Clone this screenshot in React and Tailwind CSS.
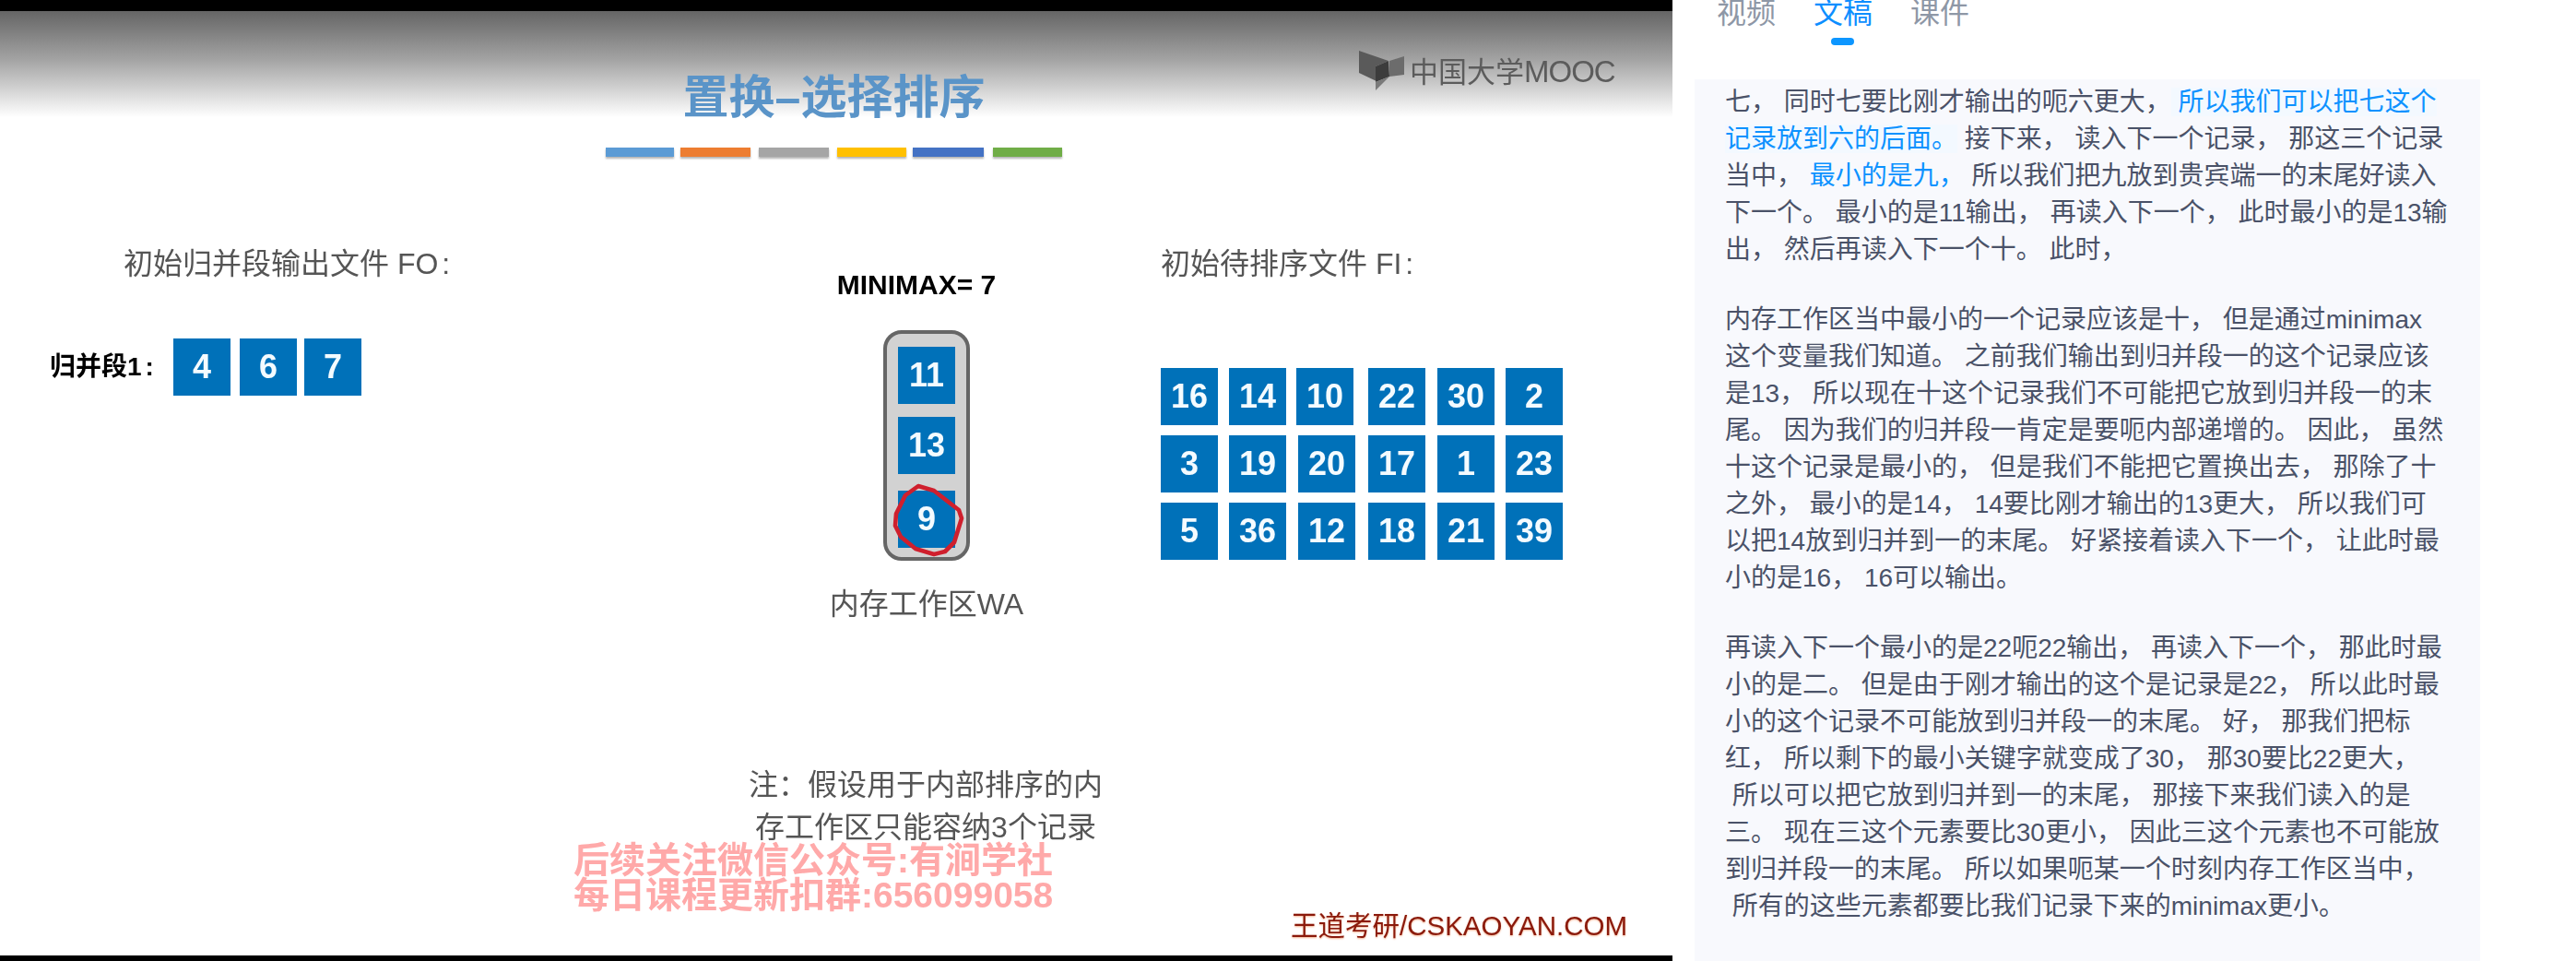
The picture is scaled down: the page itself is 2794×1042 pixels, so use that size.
const fw = (s) => s.replace(/,/g, "\uFF0C");

const Cell = ({ n, className = "" }) => (
  <div className={`flex h-[62px] w-[62px] shrink-0 items-center justify-center bg-[#0071b9] text-[36px] font-bold text-[#f4fbff] ${className}`}>
    {n}
  </div>
);

const bars = ["bg-[#5b9bd5] w-[74px]", "bg-[#ed7d31] w-[76px] ml-[7px]", "bg-[#a5a5a5] w-[76px] ml-[9px]", "bg-[#ffc000] w-[75px] ml-[9px]", "bg-[#4472c4] w-[77px] ml-[7px]", "bg-[#70ad47] w-[75px] ml-[10px]"];

const rows = [
  [[16, "ml-[74px]"], [14, "ml-[12px]"], [10, "ml-[11px]"], [22, "ml-[16px]"], [30, "ml-[13px]"], [2, "ml-[12px]"]],
  [[3, "ml-[74px]"], [19, "ml-[12px]"], [20, "ml-[13px]"], [17, "ml-[14px]"], [1, "ml-[13px]"], [23, "ml-[12px]"]],
  [[5, "ml-[74px]"], [36, "ml-[12px]"], [12, "ml-[13px]"], [18, "ml-[14px]"], [21, "ml-[13px]"], [39, "ml-[12px]"]],
];

const Hi = ({ children, bg }) => (
  <span className={bg ? "bg-[#f3f9ff] text-[#0d92ff]" : "text-[#0d92ff]"}>{fw(children)}</span>
);

const p1 = [
  <>{fw("七, 同时七要比刚才输出的呃六更大,")}<Hi bg>{" 所以我们可以把七这个"}</Hi></>,
  <><Hi bg>记录放到六的后面。</Hi>{fw(" 接下来, 读入下一个记录, 那这三个记录")}</>,
  <>{fw("当中, ")}<Hi>最小的是九,</Hi>{fw(" 所以我们把九放到贵宾端一的末尾好读入")}</>,
  <>{fw("下一个。 最小的是11输出, 再读入下一个, 此时最小的是13输")}</>,
  <>{fw("出, 然后再读入下一个十。 此时,")}</>,
];
const p2 = [
  "内存工作区当中最小的一个记录应该是十, 但是通过minimax",
  "这个变量我们知道。 之前我们输出到归并段一的这个记录应该",
  "是13, 所以现在十这个记录我们不可能把它放到归并段一的末",
  "尾。 因为我们的归并段一肯定是要呃内部递增的。 因此, 虽然",
  "十这个记录是最小的, 但是我们不能把它置换出去, 那除了十",
  "之外, 最小的是14, 14要比刚才输出的13更大, 所以我们可",
  "以把14放到归并到一的末尾。 好紧接着读入下一个, 让此时最",
  "小的是16, 16可以输出。",
].map(fw);
const p3 = [
  "再读入下一个最小的是22呃22输出, 再读入下一个, 那此时最",
  "小的是二。 但是由于刚才输出的这个是记录是22, 所以此时最",
  "小的这个记录不可能放到归并段一的末尾。 好, 那我们把标",
  "红, 所以剩下的最小关键字就变成了30, 那30要比22更大,",
  " 所以可以把它放到归并到一的末尾, 那接下来我们读入的是",
  "三。 现在三这个元素要比30更小, 因此三这个元素也不可能放",
  "到归并段一的末尾。 所以如果呃某一个时刻内存工作区当中,",
  " 所有的这些元素都要比我们记录下来的minimax更小。",
].map(fw);

const Lines = ({ items, className = "" }) => (
  <div className={className}>
    {items.map((l, i) => (
      <div key={i} className="h-10 whitespace-pre leading-10">{l}</div>
    ))}
  </div>
);

export default function App() {
  return (
    <div className="flex h-[1042px] w-[2794px] overflow-hidden bg-white font-['Liberation_Sans','Noto_Sans_CJK_SC',sans-serif]">
      <div className="flex w-[1814px] shrink-0 flex-col bg-black">
        <div className="h-3 shrink-0" />
        <div className="flex min-h-0 flex-1 flex-col bg-white bg-[linear-gradient(#656565,#a2a2a2_45%,#fff)] bg-[length:100%_115px] bg-no-repeat blur-[0.5px]">
          {/* header */}
          <div className="flex h-[158px] shrink-0 items-start">
            <div className="ml-[657px] flex w-[495px] flex-col items-center pt-[65px]">
              <div className="h-[58px] text-[50px] leading-[58px] font-bold whitespace-nowrap text-[#5a94c8]">置换–选择排序</div>
              <div className="mt-[25px] flex w-full">
                {bars.map((b) => (
                  <div key={b} className={`h-[10px] shadow-[0_2px_2px_rgba(0,0,0,0.3)] ${b}`} />
                ))}
              </div>
            </div>
            <div className="mt-[43px] ml-[322px] flex items-center">
              <svg width="52" height="44" viewBox="0 0 52 44" className="shrink-0">
                <polygon points="0,0 32,11 18,17 19,33 0,24" fill="#5a5a5a" />
                <polygon points="18,17 32,11 33,28 18,34" fill="#3c3c3c" />
                <polygon points="33,11 49,6 49,26 33,28" fill="#6c6c6c" />
                <polygon points="18,34 33,28 18,43" fill="#7a7a7a" />
              </svg>
              <span className="ml-[3px] text-[31px] leading-none whitespace-nowrap text-[#5c5c5c]">
                中国大学<span className="text-[33px] tracking-[-1px]">MOOC</span>
              </span>
            </div>
          </div>

          {/* diagram */}
          <div className="flex h-[650px] shrink-0">
            <div className="w-[958px] shrink-0 pl-[54px]">
              <div className="mt-[96px] pl-[80px] text-[32px] leading-[40px] whitespace-nowrap text-[#555]">初始归并段输出文件 FO<span className="ml-1">:</span></div>
              <div className="mt-[61px] flex items-center">
                <div className="w-[134px] text-[28px] leading-none font-bold whitespace-nowrap text-black">归并段1<span className="ml-1">:</span></div>
                <Cell n={4} />
                <Cell n={6} className="ml-[10px]" />
                <Cell n={7} className="ml-[8px]" />
              </div>
            </div>
            <div className="flex w-[94px] shrink-0 flex-col items-center">
              <div className="mt-[122px] ml-[-22px] h-[34px] text-[30px] leading-[34px] font-bold whitespace-nowrap text-black">MINIMAX= 7</div>
              <div className="mt-[32px] flex h-[250px] w-[94px] shrink-0 flex-col items-center rounded-[20px] border-4 border-[#666] bg-[#d2d2d2] pt-[14px]">
                <Cell n={11} />
                <Cell n={13} className="mt-[14px]" />
                <div className="relative mt-[18px]">
                  <Cell n={9} />
                  <svg width="82" height="84" viewBox="66 182 82 84" className="absolute top-[-10px] left-[-8px]">
                    <path d="M96 187 L113 192 L140 213 L143 222 L135 248 L125 258 L113 261 L93 255 L77 242 L71 230 L72 217 L82 197 Z" fill="none" stroke="#cf1f2d" strokeWidth="4.6" strokeLinejoin="round" />
                  </svg>
                </div>
              </div>
              <div className="mt-[27px] text-[32px] leading-[40px] whitespace-nowrap text-[#555]">内存工作区WA</div>
            </div>
            <div className="flex-1">
              <div className="mt-[96px] pl-[207px] text-[32px] leading-[40px] whitespace-nowrap text-[#555]">初始待排序文件 FI<span className="ml-1">:</span></div>
              <div className="mt-[93px] flex flex-col gap-[11px] pl-[133px]">
                {rows.map((r, i) => (
                  <div key={i} className="flex">
                    {r.map(([n, c]) => <Cell key={n} n={n} className={c} />)}
                  </div>
                ))}
              </div>
            </div>
          </div>

          {/* footer */}
          <div className="flex min-h-0 flex-1">
            <div className="ml-[622px] w-[590px] shrink-0">
              <div className="flex flex-col items-center pt-2 pl-[174px] text-[32px] leading-[46px] whitespace-nowrap text-[#555]">
                <div>{"注\uFF1A假设用于内部排序的内"}</div>
                <div>存工作区只能容纳3个记录</div>
              </div>
              <div className="mt-[-6px] w-max text-[39px] leading-[38px] font-bold whitespace-nowrap text-[#ffa9a9] [text-shadow:0_0_3px_#fff]">
                <div>后续关注微信公众号:有涧学社</div>
                <div>每日课程更新扣群:656099058</div>
              </div>
            </div>
            <div className="ml-[188px] self-end pb-[17px] text-[29.5px] leading-[30px] whitespace-nowrap text-[#8a1a0c] [text-shadow:0_1px_2px_#f3b08e]">王道考研/CSKAOYAN.COM</div>
          </div>
        </div>
        <div className="h-[6px] shrink-0" />
      </div>

      <div className="flex flex-1 flex-col">
        <div className="flex h-[86px] shrink-0 items-start pl-[48px]">
          <div className="flex gap-[41px] text-[32px] leading-none whitespace-nowrap text-[#8e97a6]">
            <div className="mt-[-2px]">视频</div>
            <div className="relative mt-[-2px] text-[#0d8eff]">
              文稿
              <div className="absolute top-[43px] left-[19px] h-2 w-[25px] rounded-full bg-[#0d96ff]" />
            </div>
            <div className="mt-[-2px]">课件</div>
          </div>
        </div>
        <div className="ml-[24px] min-h-0 w-[852px] flex-1 bg-[#f8f9fd] pt-[5px] pl-[33px] text-[28px] text-[#4a5268]">
          <Lines items={p1} className="mb-9" />
          <Lines items={p2} className="mb-9" />
          <Lines items={p3} />
        </div>
      </div>
    </div>
  );
}
